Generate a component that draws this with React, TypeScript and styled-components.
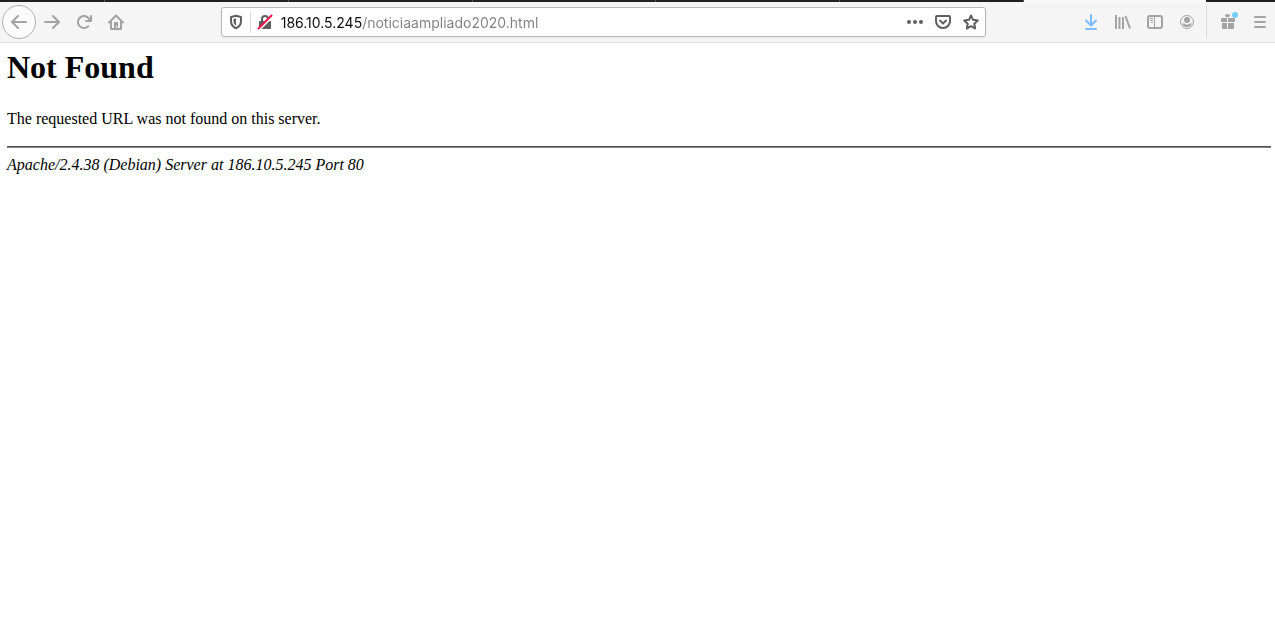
import React from 'react';
import styled, { createGlobalStyle } from 'styled-components';

const GlobalStyle = createGlobalStyle`
  * { box-sizing: border-box; }
  body { margin: 0; background: #fff; }
`;

const TabStrip = styled.div`
  display: flex;
  height: 2px;
  background: #232021;
`;

const Tab = styled.div<{ $active?: boolean; $grow?: number }>`
  flex: ${(p) => p.$grow ?? 184} 1 0;
  border-right: ${(p) => (p.$active ? 'none' : '1px solid #5a5859')};
  background: ${(p) => (p.$active ? '#f9f9fa' : 'transparent')};
`;

const StripEnd = styled.div`
  flex: 69 1 0;
`;

const Toolbar = styled.nav`
  display: flex;
  align-items: center;
  height: 41px;
  padding: 0 0 0 2px;
  background: #f5f5f5;
  border-bottom: 1px solid #dedede;
`;

const ToolbarEnd = styled.div`
  display: flex;
  flex: none;
  align-items: center;
  padding: 0 3px;
`;

const IconButton = styled.button<{ $color?: string; $width?: number }>`
  display: flex;
  flex: none;
  align-items: center;
  justify-content: center;
  width: ${(p) => p.$width ?? 32}px;
  height: 32px;
  padding: 0;
  border: 0;
  background: transparent;
  color: ${(p) => p.$color ?? '#a3a3a3'};
`;

const BackButton = styled(IconButton)`
  height: 34px;
  border: 1px solid #b0b0b0;
  border-radius: 50%;
  background: #fcfcfc;
`;

const Spacer = styled.div`
  flex: 89 1 0;
`;

const AddressBar = styled.div`
  display: flex;
  flex: 765 1 0;
  align-items: center;
  height: 30px;
  padding: 0 0 0 1px;
  border: 1px solid #b9b9b9;
  border-radius: 3px;
  background: #fff;
  box-shadow: 0 1px 3px rgba(0, 0, 0, 0.06);
`;

const Divider = styled.div<{ $tall?: boolean }>`
  flex: none;
  width: 1px;
  height: ${(p) => (p.$tall ? 34 : 22)}px;
  background: #dcdcdc;
`;

/* The host part is dark and the path is grey: a hard-stop gradient clipped to the text. */
const UrlInput = styled.input`
  flex: 1;
  min-width: 0;
  height: 24px;
  padding: 0 0 0 2px;
  border: 0;
  outline: 0;
  font: 14px/20px Inter, 'Liberation Sans', sans-serif;
  color: transparent;
  caret-color: #0c0c0d;
  background: linear-gradient(90deg, #0c0c0d 84px, #808080 84px);
  -webkit-background-clip: text;
  background-clip: text;
`;

const Page = styled.main`
  padding: 8px 4px 8px 7px;
  font-family: 'Liberation Serif', serif;
  font-size: 16px;
  line-height: 18px;
  color: #000;
`;

const Title = styled.h1`
  margin: 0 0 27px;
  font-size: 32px;
  line-height: 32px;
`;

const Message = styled.p`
  margin: 0;
`;

const Rule = styled.hr`
  height: 2px;
  margin: 18px 0 8px;
  border: 0;
  border-top: 1px solid #4f4f4f;
  background: #858585;
`;

const Signature = styled.address`
  font-style: italic;
`;

const Icon = ({ children }: { children: React.ReactNode }) => (
  <svg width="16" height="16" viewBox="0 0 16 16" fill="currentColor" aria-hidden="true">
    {children}
  </svg>
);

const line = {
  fill: 'none',
  stroke: 'currentColor',
  strokeWidth: 2,
  strokeLinecap: 'round',
  strokeLinejoin: 'round',
} as const;

const DARK = '#5f5f60';

export default function App() {
  return (
    <>
      <GlobalStyle />
      <TabStrip>
        <Tab $grow={105} />
        <Tab />
        <Tab />
        <Tab />
        <Tab />
        <Tab />
        <Tab $active />
        <StripEnd />
      </TabStrip>
      <Toolbar aria-label="Navigation">
        <BackButton $width={34} aria-label="Back">
          <Icon><path {...line} d="M15 8H1.5M7 2 1 8l6 6" /></Icon>
        </BackButton>
        <IconButton aria-label="Forward">
          <Icon><path {...line} d="M1 8h13.5M9 2l6 6-6 6" /></Icon>
        </IconButton>
        <IconButton aria-label="Reload">
          <Icon>
            <path d="M15 1a1 1 0 0 0-1 1v2.418A6.995 6.995 0 1 0 8 15a6.954 6.954 0 0 0 4.95-2.05 1 1 0 0 0-1.414-1.414A5.019 5.019 0 1 1 12.549 6H10a1 1 0 0 0 0 2h5a1 1 0 0 0 1-1V2a1 1 0 0 0-1-1z" />
          </Icon>
        </IconButton>
        <IconButton aria-label="Home">
          <Icon>
            <path {...line} d="M1 8.5 8 1.5l7 7M3 8v7h10V8" />
            <path d="M6 8h4v7H9v-3H8v3H6z" />
          </Icon>
        </IconButton>
        <Spacer />
        <AddressBar>
          <IconButton $color={DARK} $width={27} aria-label="Tracking protection">
            <Icon>
              <path {...line} d="M8 1.8 13 3v4c0 3.5-2 6-5 7.2C5 13 3 10.5 3 7V3z" />
              <path d="M8 4.5v7C6.3 10.5 5.5 9 5.5 7V5z" />
            </Icon>
          </IconButton>
          <Divider />
          <IconButton $color={DARK} $width={28} aria-label="Connection is not secure">
            <Icon>
              <path d="M2 8a1 1 0 0 1 1-1h10a1 1 0 0 1 1 1v6a1 1 0 0 1-1 1H3a1 1 0 0 1-1-1z" />
              <path {...line} d="M5 7V5a3 3 0 0 1 6 0v2" />
              <path d="M2.5 15.5 15.5 2.5" stroke="#fff" strokeWidth="2" />
              <path d="M1.5 14.5 14.5 1.5" stroke="#f0174e" strokeWidth="2" strokeLinecap="round" />
            </Icon>
          </IconButton>
          <UrlInput
            type="text"
            aria-label="Address"
            spellCheck={false}
            defaultValue="186.10.5.245/noticiaampliado2020.html"
          />
          <IconButton $color={DARK} $width={28} aria-label="Page actions">
            <Icon>
              <circle cx="2" cy="8" r="2" />
              <circle cx="8" cy="8" r="2" />
              <circle cx="14" cy="8" r="2" />
            </Icon>
          </IconButton>
          <IconButton $color={DARK} $width={28} aria-label="Save to Pocket">
            <Icon>
              <path {...line} d="M2 2h12a1 1 0 0 1 1 1v4a7 7 0 0 1-14 0V3a1 1 0 0 1 1-1z" />
              <path {...line} d="m5 6.5 3 3 3-3" />
            </Icon>
          </IconButton>
          <IconButton $color={DARK} $width={28} aria-label="Bookmark this page">
            <Icon>
              <path {...line} d="m8 1.5 2 4.3 4.8.6-3.5 3.3.9 4.8L8 12.2l-4.2 2.3.9-4.8L1.2 6.4 6 5.8z" />
            </Icon>
          </IconButton>
        </AddressBar>
        <Spacer />
        <IconButton $color="#7abcfd" aria-label="Downloads">
          <Icon><path {...line} d="M8 1v10M3 6.5l5 5 5-5M3 15h10" /></Icon>
        </IconButton>
        <IconButton aria-label="Library">
          <Icon>
            <path {...line} strokeLinecap="butt" d="M1 1v14M4.5 3v12M8 3v12M10.500 2 15 14.500" />
          </Icon>
        </IconButton>
        <IconButton aria-label="Sidebars">
          <Icon>
            <rect {...line} x="1" y="2" width="14" height="12" rx="2" />
            <path d="M7 2h1v12H7zM3 4h3v1H3zM3 6h3v1H3zM4 8h2v1H4z" />
          </Icon>
        </IconButton>
        <IconButton aria-label="Account">
          <Icon>
            <circle {...line} strokeWidth={1} cx="8" cy="8" r="6.5" />
            <circle cx="8" cy="6" r="3" />
            <path d="M3 9.5h2.3a4 4 0 0 0 5.4 0H13A5.2 5.2 0 0 1 8 13a5.2 5.2 0 0 1-5-3.5z" />
          </Icon>
        </IconButton>
        <ToolbarEnd>
          <Divider $tall />
          <IconButton $width={41} aria-label="What's new">
            <svg width="20" height="20" viewBox="0 0 20 20" fill="currentColor" aria-hidden="true">
              <path d="M3 7a1 1 0 0 1 1-1h5v4H3zM10 6h6a1 1 0 0 1 1 1v3h-7zM4 11h5v6H5a1 1 0 0 1-1-1zM10 11h6v5a1 1 0 0 1-1 1h-5zM7 3.5a1.5 1.5 0 0 1 2.5-1 1.5 1.5 0 0 1 2.5 1C12 4.5 10.5 5 9.5 5.5 8.5 5 7 4.5 7 3.5z" />
              <circle cx="17" cy="3" r="3" fill="#73cdfb" />
            </svg>
          </IconButton>
          <IconButton $width={24} aria-label="Open menu">
            <Icon><path {...line} d="M3 3h10M3 8h10M3 13h10" /></Icon>
          </IconButton>
        </ToolbarEnd>
      </Toolbar>
      <Page>
        <Title>Not Found</Title>
        <Message>The requested URL was not found on this server.</Message>
        <Rule />
        <Signature>Apache/2.4.38 (Debian) Server at 186.10.5.245 Port 80</Signature>
      </Page>
    </>
  );
}
